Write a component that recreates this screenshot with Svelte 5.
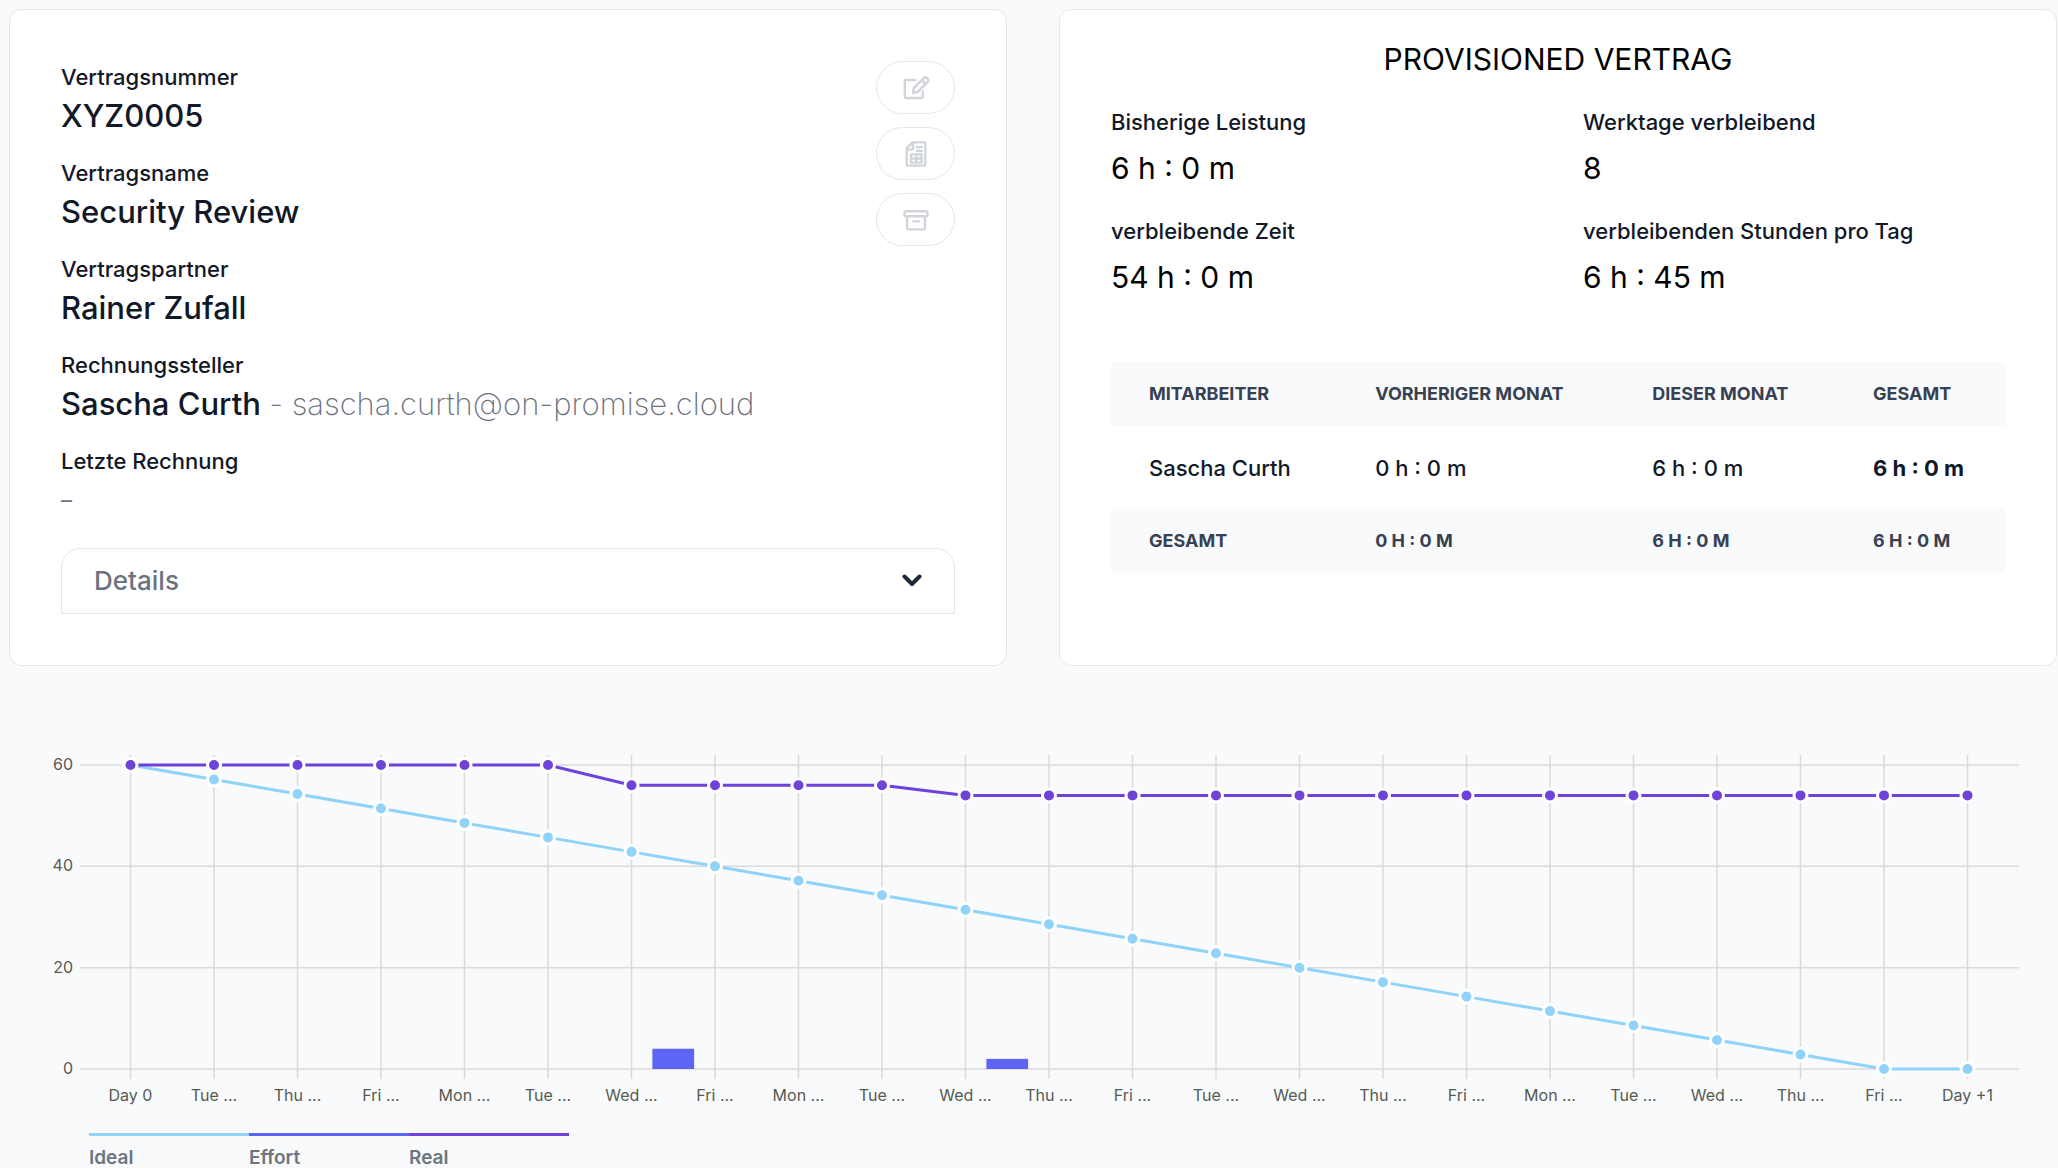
<script>
    const contract = [
        { label: 'Vertragsnummer', value: 'XYZ0005' },
        { label: 'Vertragsname', value: 'Security Review' },
        { label: 'Vertragspartner', value: 'Rainer Zufall' },
        { label: 'Rechnungssteller', value: 'Sascha Curth', mail: 'sascha.curth@on-promise.cloud' },
        { label: 'Letzte Rechnung', value: '' },
    ];

    const stats = [
        { label: 'Bisherige Leistung', value: '6 h : 0 m' },
        { label: 'Werktage verbleibend', value: '8' },
        { label: 'verbleibende Zeit', value: '54 h : 0 m' },
        { label: 'verbleibenden Stunden pro Tag', value: '6 h : 45 m' },
    ];

    const days = [
        'Day 0', 'Tue ...', 'Thu ...', 'Fri ...', 'Mon ...', 'Tue ...', 'Wed ...', 'Fri ...',
        'Mon ...', 'Tue ...', 'Wed ...', 'Thu ...', 'Fri ...', 'Tue ...', 'Wed ...', 'Thu ...',
        'Fri ...', 'Mon ...', 'Tue ...', 'Wed ...', 'Thu ...', 'Fri ...', 'Day +1',
    ];
    const ticks = [60, 40, 20, 0];
    const ideal = days.map((d, i) => Math.max(0, 60 - (60 / 21) * i));
    const real = days.map((d, i) => (i < 6 ? 60 : i < 10 ? 56 : 54));
    const effort = [{ day: 6, hours: 4 }, { day: 10, hours: 2 }];

    const legend = [
        { name: 'Ideal', kind: 'ideal' },
        { name: 'Effort', kind: 'effort' },
        { name: 'Real', kind: 'real' },
    ];

    let open = false;
    let width = 1200;

    // plot area inside the svg
    const left = 80;
    const top = 20;
    const plotHeight = 304;

    $: right = width - 39;
    $: step = (right - left - 102) / (days.length - 1);
    $: x = (i) => left + 50.5 + i * step;
    $: y = (v) => top + plotHeight - (v / 60) * plotHeight;
    $: points = (list) => list.map((v, i) => `${x(i)},${y(v)}`).join(' ');
</script>

<main>
    <div class="cards">
        <section class="card contract">
            <dl>
                {#each contract as row}
                    <div class="entry">
                        <dt>{row.label}</dt>
                        {#if row.mail}
                            <dd>{row.value} <span class="mail">- {row.mail}</span></dd>
                        {:else if row.value}
                            <dd>{row.value}</dd>
                        {:else}
                            <dd class="none">–</dd>
                        {/if}
                    </div>
                {/each}
            </dl>

            <div class="actions">
                <button aria-label="Bearbeiten" disabled>
                    <svg viewBox="0 0 30 30">
                        <path d="M14.5 7H5a1.2 1.2 0 0 0-1.2 1.2v15.6A1.2 1.2 0 0 0 5 25h15.6a1.2 1.2 0 0 0 1.2-1.2v-5.3" />
                        <path d="M12 19.8l.9-4.9 9.6-9.6a2.75 2.75 0 0 1 3.9 3.9l-9.6 9.6zM20.6 7.2l3.9 3.9" />
                    </svg>
                </button>
                <button aria-label="Rechnung" disabled>
                    <svg viewBox="0 0 30 30">
                        <path d="M11.5 3.4h11.8a1 1 0 0 1 1 1v21.2a1 1 0 0 1-1 1H6.7a1 1 0 0 1-1-1V9.2zM12 4v5.6a1 1 0 0 1-1 1H6" />
                        <path d="M15.8 8h5M15.8 12h5M10 15.4h10.6v8.2H10zM15.3 15.4v8.2M10 19.5h10.6" />
                    </svg>
                </button>
                <button aria-label="Archivieren" disabled>
                    <svg viewBox="0 0 30 30">
                        <rect x="3.6" y="6.2" width="22.8" height="5" rx="1.4" />
                        <path d="M6 11.2v11.8a1.4 1.4 0 0 0 1.4 1.4h15.2a1.4 1.4 0 0 0 1.4-1.4V11.2M12.4 16.4h5.6" />
                    </svg>
                </button>
            </div>

            <button class="details" aria-expanded={open} on:click={() => (open = !open)}>
                <span>Details</span>
                <svg viewBox="0 0 20 20">
                    <path d="M2.5 6.5l7.5 7.5 7.5-7.5" />
                </svg>
            </button>
        </section>

        <section class="card summary">
            <h2>PROVISIONED VERTRAG</h2>
            <dl class="stats">
                {#each stats as stat}
                    <div>
                        <dt>{stat.label}</dt>
                        <dd>{stat.value}</dd>
                    </div>
                {/each}
            </dl>

            <table>
                <colgroup>
                    <col class="col-name" />
                    <col class="col-last" />
                    <col class="col-this" />
                    <col />
                </colgroup>
                <thead>
                    <tr>
                        <th>MITARBEITER</th>
                        <th>VORHERIGER MONAT</th>
                        <th>DIESER MONAT</th>
                        <th>GESAMT</th>
                    </tr>
                </thead>
                <tbody>
                    <tr>
                        <td>Sascha Curth</td>
                        <td>0 h : 0 m</td>
                        <td>6 h : 0 m</td>
                        <td class="total">6 h : 0 m</td>
                    </tr>
                </tbody>
                <tfoot>
                    <tr>
                        <th>GESAMT</th>
                        <th>0 H : 0 M</th>
                        <th>6 H : 0 M</th>
                        <th>6 H : 0 M</th>
                    </tr>
                </tfoot>
            </table>
        </section>
    </div>

    <section class="chart" bind:clientWidth={width}>
        <svg class="plot" {width} height="370">
            <g class="grid">
                {#each ticks as tick}
                    <line x1={left} x2={right} y1={y(tick)} y2={y(tick)} />
                    <text class="tick" x={left - 7} y={y(tick) + 5}>{tick}</text>
                {/each}
                {#each days as day, i}
                    <line x1={x(i)} x2={x(i)} y1={top - 10} y2={top + plotHeight + 10} />
                    <text class="day" x={x(i)} y={top + plotHeight + 32}>{day}</text>
                {/each}
            </g>

            {#each effort as bar}
                <rect class="bar" x={x(bar.day + 0.25)} y={y(bar.hours)} width={step / 2} height={y(0) - y(bar.hours)} />
            {/each}

            <g class="ideal">
                <polyline points={points(ideal)} />
                {#each ideal as v, i}
                    <circle cx={x(i)} cy={y(v)} r="6.5" />
                {/each}
            </g>
            <g class="real">
                <polyline points={points(real)} />
                {#each real as v, i}
                    <circle cx={x(i)} cy={y(v)} r="6.5" />
                {/each}
            </g>
        </svg>

        <ul class="legend">
            {#each legend as item}
                <li class={item.kind}>{item.name}</li>
            {/each}
        </ul>
    </section>
</main>

<style>
    :global(body) {
        margin: 0;
        background: #f9fafc;
    }

    main {
        font-family: Inter, "Open Sans", sans-serif;
        color: #111827;
    }

    dl, dd, h2, ul {
        margin: 0;
        padding: 0;
    }

    .cards {
        display: grid;
        grid-template-columns: 1fr 1fr;
        gap: 52px;
        padding: 9px 1px 0 9px;
    }

    .card {
        box-sizing: border-box;
        background: white;
        border: 1px solid #e5e7eb;
        border-radius: 12px;
    }

    .contract {
        display: grid;
        grid-template-columns: 1fr auto;
        align-content: start;
        row-gap: 25px;
        padding: 51px;
    }

    .contract dl {
        display: grid;
        gap: 18px;
    }

    dt {
        font-size: 22px;
        line-height: 32px;
        font-weight: 500;
    }

    dd {
        font-size: 30px;
        line-height: 46px;
    }

    .contract dd {
        font-size: 31px;
        font-weight: 500;
    }

    .contract .mail {
        font-weight: 200;
        color: #6b7280;
    }

    .contract .none {
        font-size: 22px;
        font-weight: 400;
        color: #6b7280;
    }

    .actions {
        display: flex;
        flex-direction: column;
        gap: 13px;
    }

    .actions button {
        display: grid;
        place-items: center;
        width: 79px;
        height: 53px;
        padding: 0;
        background: white;
        border: 1px solid #e5e7eb;
        border-radius: 27px;
    }

    .actions svg {
        width: 30px;
        height: 30px;
        fill: none;
        stroke: #d1d5db;
        stroke-width: 2.4;
        stroke-linecap: round;
        stroke-linejoin: round;
    }

    .details {
        grid-column: 1 / -1;
        display: flex;
        justify-content: space-between;
        align-items: center;
        height: 66px;
        padding: 0 32px 2px;
        background: white;
        border: 1px solid #e5e7eb;
        border-radius: 20px 20px 0 0;
        font: 500 26px Inter, "Open Sans", sans-serif;
        color: #6b7280;
    }

    .details svg {
        width: 20px;
        height: 20px;
        fill: none;
        stroke: #1f2937;
        stroke-width: 4;
        stroke-linecap: round;
        stroke-linejoin: round;
    }

    .summary {
        padding: 28px 51px;
    }

    h2 {
        text-align: center;
        font-size: 30px;
        line-height: 42px;
        font-weight: 400;
        color: black;
    }

    .stats {
        display: grid;
        grid-template-columns: 1fr 1fr;
        gap: 24px 50px;
        margin: 26px 0 62px;
    }

    .stats dd {
        margin-top: 7px;
        color: black;
    }

    table {
        width: 100%;
        table-layout: fixed;
        border-collapse: collapse;
        text-align: left;
    }

    .col-name {
        width: 25.3%;
    }

    .col-last {
        width: 31%;
    }

    .col-this {
        width: 24.7%;
    }

    th, td {
        box-sizing: border-box;
        padding: 0 0 0 38px;
        white-space: nowrap;
    }

    th {
        height: 64px;
        padding-bottom: 2px;
        background: #f9fafc;
        font-size: 18px;
        font-weight: 700;
        color: #374151;
    }

    td {
        height: 83px;
        font-size: 22px;
        font-weight: 500;
    }

    td.total {
        font-weight: 700;
    }

    .chart {
        margin-top: 79px;
    }

    .plot {
        display: block;
    }

    .grid line {
        stroke: #dadada;
        stroke-width: 1.5;
    }

    .grid text {
        font-size: 16px;
        fill: #555b51;
    }

    .grid .tick {
        text-anchor: end;
    }

    .grid .day {
        text-anchor: middle;
    }

    .bar {
        fill: #5e64f6;
    }

    polyline {
        fill: none;
        stroke-width: 3;
    }

    circle {
        stroke: white;
        stroke-width: 3;
    }

    .ideal polyline {
        stroke: #8fd3fa;
    }

    .ideal circle {
        fill: #8fd3fa;
    }

    .real polyline {
        stroke: #6f42d9;
    }

    .real circle {
        fill: #6f42d9;
    }

    .legend {
        display: flex;
        margin: 18px 0 0 89px;
        list-style: none;
    }

    .legend li {
        box-sizing: border-box;
        width: 160px;
        height: 35px;
        padding-top: 10px;
        border-top: 3px solid;
        font-size: 19px;
        line-height: 24px;
        font-weight: 600;
        color: #6c7680;
    }

    .legend .ideal {
        border-color: #8fd3fa;
    }

    .legend .effort {
        border-color: #5e64f6;
    }

    .legend .real {
        border-color: #6f42d9;
    }
</style>
